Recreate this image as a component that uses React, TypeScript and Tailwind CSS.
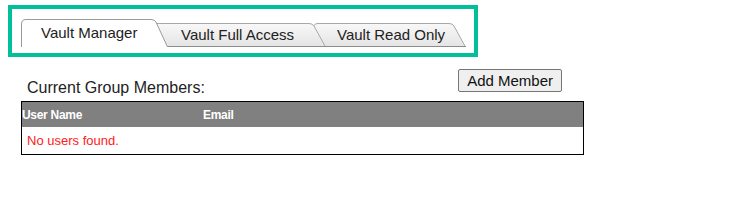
import React from 'react';

type TabProps = {
  label: string;
  width: number;
  height: number;
  slant: number;
  active?: boolean;
  textLeft: number;
  className?: string;
};

function Tab({ label, width, height, slant, active, textLeft, className }: TabProps) {
  const w = width;
  const h = height;
  const topRight = w - slant;
  // outline: vertical left, rounded top-left, top edge, rounded shoulder, slanted right
  const outline = `M0.5,${h} V5 Q0.5,0.5 5,0.5 H${topRight - 4} Q${topRight - 0.5},0.5 ${topRight + 1},3 L${w - 0.5},${h}`;
  const gid = `g-${label.replace(/\s/g, '')}`;
  return (
    <div
      className={`relative shrink-0 ${className ?? ''}`}
      style={{ width: w, height: h }}
    >
      <svg className="absolute inset-0" width={w} height={h} viewBox={`0 0 ${w} ${h}`}>
        <defs>
          <linearGradient id={gid} x1="0" y1="0" x2="0" y2="1">
            <stop offset="0" stopColor="#f8f8f8" />
            <stop offset="1" stopColor="#e4e4e4" />
          </linearGradient>
        </defs>
        <path d={`${outline} Z`} fill={active ? '#ffffff' : `url(#${gid})`} stroke="none" />
        <path d={outline} fill="none" stroke={active ? '#9a9a9a' : '#a8a8a8'} strokeWidth="1" />
        {!active && <line x1="0" y1={h - 0.5} x2={w} y2={h - 0.5} stroke="#8c8c8c" strokeWidth="1" />}
      </svg>
      <span
        className="absolute top-0 bottom-0 flex items-center text-[15px] text-[#222] whitespace-nowrap"
        style={{ left: textLeft, paddingTop: active ? 0 : 1 }}
      >
        {label}
      </span>
    </div>
  );
}

export default function App() {
  return (
    <div className="w-[746px] h-[220px] bg-white font-['Liberation_Sans',Arial,sans-serif] pt-[5px] pl-[8px]">
      <div className="w-[470px] h-[52px] border-[4px] border-[#00bf9a] pl-[9px] pt-[10px] flex items-start">
        <div className="flex items-end h-[28px]">
          <Tab label="Vault Manager" width={147} height={28} slant={13} active textLeft={20} className="z-30" />
          <Tab label="Vault Full Access" width={176} height={24} slant={13} textLeft={31} className="z-20 -ml-[18px]" />
          <Tab label="Vault Read Only" width={153} height={24} slant={13} textLeft={24} className="z-10 -ml-[13px]" />
        </div>
      </div>

      <div className="w-[563px] ml-[13px] mt-[12px]">
        <div className="flex items-start justify-between">
          <div className="pl-[6px] pt-[10px] text-[16px] text-[#222] leading-[18px]">Current Group Members:</div>
          <button className="mr-[22px] h-[23px] px-[8px] text-[15px] leading-none text-[#111] bg-[#efefef] border border-[#767676] rounded-[2px]">
            Add Member
          </button>
        </div>
        <div className="mt-[4px] border border-black">
          <div className="h-[25px] bg-[#808080] flex items-center text-white font-bold text-[12px] tracking-[-0.3px]">
            <div className="w-[181px]">User Name</div>
            <div>Email</div>
          </div>
          <div className="h-[27px] flex items-center pl-[5px] text-[13px] text-[#ff1a1a]">No users found.</div>
        </div>
      </div>
    </div>
  );
}
